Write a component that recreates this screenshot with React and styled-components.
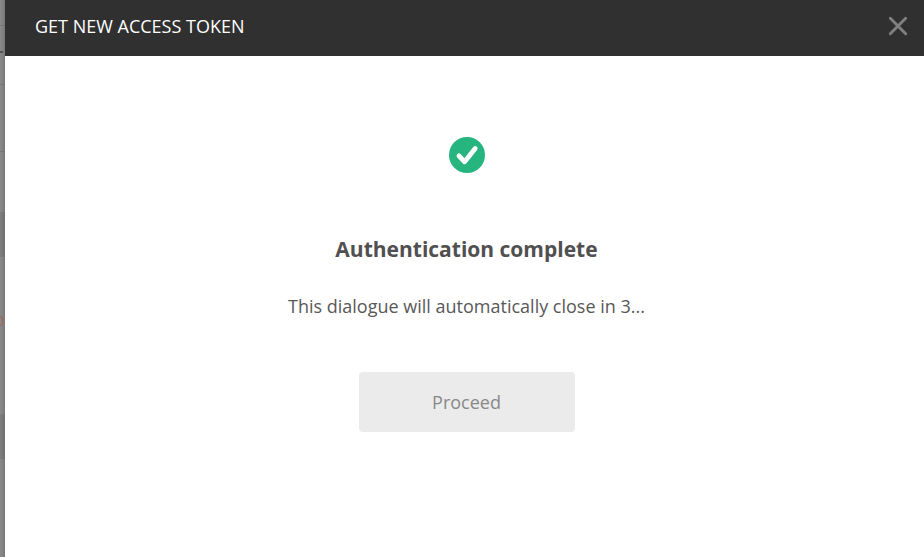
import styled, { createGlobalStyle } from 'styled-components';

const GlobalStyle = createGlobalStyle`
  * {
    box-sizing: border-box;
  }

  body {
    margin: 0;
    overflow: hidden;
    background-color: #888;
    font-family: 'Open Sans', sans-serif;
  }
`;

const Page = styled.div`
  display: flex;
  height: 100vh;
`;

const Backdrop = styled.div`
  width: 5px;
  flex-shrink: 0;
  overflow: hidden;
  background: linear-gradient(to right, #888 20%, #787878);
`;

const Strip = styled.div`
  height: ${(props) => props.$height}px;
  display: flex;
  align-items: flex-start;
  background-color: ${(props) =>
    props.$dark ? 'rgba(0, 0, 0, 0.08)' : 'transparent'};
  border-bottom: ${(props) =>
    props.$line ? '1px solid rgba(0, 0, 0, 0.1)' : 'none'};
`;

const Dash = styled.span`
  width: 3px;
  height: 2px;
  margin-top: 25px;
  background-color: #555;
`;

const Curve = styled.span`
  width: 3px;
  height: 10px;
  margin-top: 59px;
  border: solid #a8604a;
  border-width: 1px 1.5px 1px 0;
  border-radius: 0 3px 3px 0 / 0 5px 5px 0;
`;

const Dialog = styled.section`
  flex: 1;
  display: flex;
  flex-direction: column;
  background-color: #fff;
`;

const Header = styled.header`
  height: 56px;
  display: flex;
  align-items: center;
  justify-content: space-between;
  padding: 0 16px 4px 30px;
  background-color: #303030;
`;

const Title = styled.h1`
  margin: 0;
  font-size: 18px;
  line-height: 26px;
  font-weight: 400;
  color: #fff;
`;

const CloseButton = styled.button`
  display: flex;
  padding: 0;
  border: none;
  background: none;
  color: #808080;
`;

const Content = styled.main`
  display: flex;
  flex-direction: column;
  align-items: center;
  padding: 81px 0 0 5px;
  margin-right: 1px;
`;

const Heading = styled.h2`
  margin: 61px 0 0;
  font-size: 21px;
  line-height: 30px;
  font-weight: 700;
  color: #505050;
`;

const Message = styled.p`
  margin: 28px 0 0;
  font-size: 18px;
  line-height: 28px;
  color: #585858;
`;

const ProceedButton = styled.button`
  width: 216px;
  height: 60px;
  margin-top: 52px;
  padding: 0;
  border: none;
  border-radius: 4px;
  background-color: #ebebeb;
  font-family: inherit;
  font-size: 18px;
  color: #888;
`;

const strips = [
  { height: 26, line: true },
  { height: 59, line: true, dash: true },
  { height: 67, line: true },
  { height: 60 },
  { height: 45, dark: true },
  { height: 157, curve: true },
  { height: 45, dark: true },
  { height: 98 },
];

function CloseIcon() {
  return (
    <svg width="20" height="20" viewBox="0 0 20 20">
      <path
        d="M2.3 2.3 17.7 17.7M17.7 2.3 2.3 17.7"
        stroke="currentColor"
        strokeWidth="2.9"
        strokeLinecap="round"
      />
    </svg>
  );
}

function SuccessIcon() {
  return (
    <svg width="36" height="36" viewBox="0 0 36 36">
      <circle cx="18" cy="18" r="18" fill="#26b47f" />
      <path
        d="m10 18.8 5.6 6L26.2 11.5"
        fill="none"
        stroke="#fff"
        strokeWidth="4.8"
        strokeLinecap="round"
        strokeLinejoin="round"
      />
    </svg>
  );
}

function App() {
  return (
    <Page>
      <GlobalStyle />
      <Backdrop>
        {strips.map((strip, i) => (
          <Strip
            key={i}
            $height={strip.height}
            $dark={strip.dark}
            $line={strip.line}
          >
            {strip.dash && <Dash />}
            {strip.curve && <Curve />}
          </Strip>
        ))}
      </Backdrop>

      <Dialog>
        <Header>
          <Title>GET NEW ACCESS TOKEN</Title>
          <CloseButton aria-label="Close">
            <CloseIcon />
          </CloseButton>
        </Header>

        <Content>
          <SuccessIcon />
          <Heading>Authentication complete</Heading>
          <Message>This dialogue will automatically close in 3...</Message>
          <ProceedButton>Proceed</ProceedButton>
        </Content>
      </Dialog>
    </Page>
  );
}

export default App;
